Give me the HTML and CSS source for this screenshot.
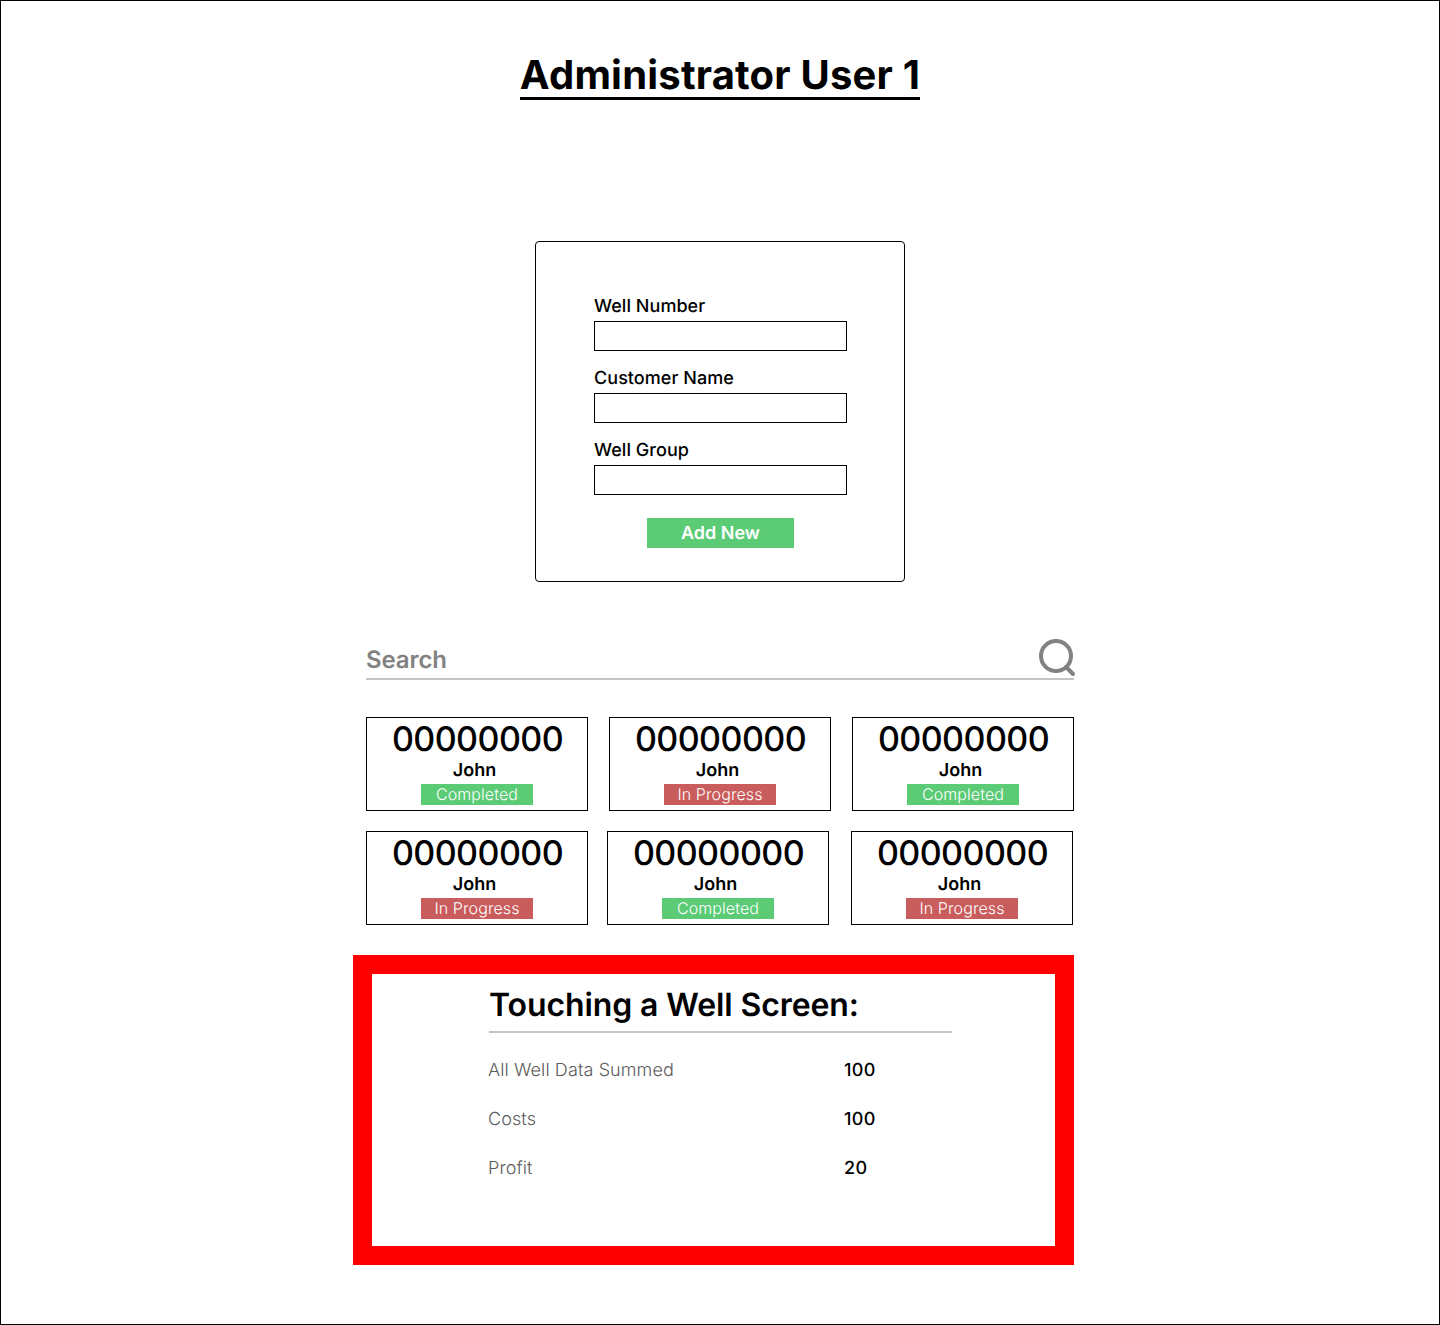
FILE: index.html
```html
<!DOCTYPE html>
<html lang="en">
<head>
<meta charset="utf-8">
<title>Administrator User 1</title>
<link rel="stylesheet" href="styles.css">
</head>
<body>
<main class="page">
  <header class="title-wrap"><h1 class="title">Administrator User 1</h1></header>

  <form class="well-form">
    <label class="field-label" for="well-number">Well Number</label>
    <input class="field-input" id="well-number" type="text">
    <label class="field-label" for="customer-name">Customer Name</label>
    <input class="field-input" id="customer-name" type="text">
    <label class="field-label" for="well-group">Well Group</label>
    <input class="field-input" id="well-group" type="text">
    <button class="add-button" type="button">Add New</button>
  </form>

  <section class="content">
    <div class="search">
      <span class="search-text">Search</span>
      <svg class="search-icon" width="38" height="38" viewBox="0 0 38 38" fill="none" aria-hidden="true">
        <circle cx="18" cy="17" r="15" stroke="#828282" stroke-width="4"/>
        <path d="M28 28 L35 35" stroke="#828282" stroke-width="4" stroke-linecap="round"/>
      </svg>
    </div>

    <div class="card-row card-row-first">
      <article class="card"><div class="card-number">00000000</div><div class="card-name">John</div><div class="card-status done">Completed</div></article>
      <article class="card"><div class="card-number">00000000</div><div class="card-name">John</div><div class="card-status progress">In Progress</div></article>
      <article class="card"><div class="card-number">00000000</div><div class="card-name">John</div><div class="card-status done">Completed</div></article>
    </div>
    <div class="card-row card-row-second">
      <article class="card"><div class="card-number">00000000</div><div class="card-name">John</div><div class="card-status progress">In Progress</div></article>
      <article class="card card-mid"><div class="card-number">00000000</div><div class="card-name">John</div><div class="card-status done">Completed</div></article>
      <article class="card card-last"><div class="card-number">00000000</div><div class="card-name">John</div><div class="card-status progress">In Progress</div></article>
    </div>

    <section class="touch-panel">
      <h2 class="touch-title">Touching a Well Screen:</h2>
      <dl class="stats">
        <dt class="stat-label">All Well Data Summed</dt><dd class="stat-value">100</dd>
        <dt class="stat-label">Costs</dt><dd class="stat-value">100</dd>
        <dt class="stat-label">Profit</dt><dd class="stat-value">20</dd>
      </dl>
    </section>
  </section>
</main>
</body>
</html>
```
FILE: styles.css
```css
* { box-sizing: border-box; }
html, body { margin: 0; padding: 0; background: #fff; }
body {
  font-family: Inter, "Liberation Sans", sans-serif;
  color: #000;
  text-rendering: geometricPrecision;
}

.page {
  width: 1440px;
  height: 1325px;
  border: 1px solid #000;
  display: flex;
  flex-direction: column;
  align-items: center;
  overflow: hidden;
}

.title-wrap { margin-top: 51px; height: 48px; }
.title {
  margin: 0;
  font-size: 40px;
  line-height: 46px;
  font-weight: 700;
  letter-spacing: 0.2px;
  border-bottom: 3px solid #000;
  height: 48px;
  white-space: nowrap;
}

.well-form {
  margin-top: 141px;
  width: 370px;
  height: 341px;
  border: 1px solid #000;
  border-radius: 4px;
  padding: 54px 57px 0 58px;
  display: flex;
  flex-direction: column;
}
.field-label {
  font-size: 18px;
  line-height: 22px;
  height: 22px;
  font-weight: 500;
  letter-spacing: 0.05px;
  margin-bottom: 3px;
}
.field-input {
  width: 253px;
  height: 30px;
  border: 1px solid #000;
  border-radius: 0;
  background: #fff;
  padding: 0;
  margin: 0 0 17px;
  display: block;
}
.add-button {
  margin: 6px 0 0 53px;
  width: 147px;
  height: 30px;
  border: 0;
  padding: 1px 0 0;
  background: #5bcb76;
  color: #fff;
  font: 600 18px/29px Inter, "Liberation Sans", sans-serif;
  text-rendering: geometricPrecision;
}

.content {
  margin-top: 54px;
  width: 708px;
  display: flex;
  flex-direction: column;
}

.search {
  height: 44px;
  border-bottom: 2px solid #c4c4c4;
  position: relative;
}
.search-text {
  display: block;
  padding-top: 9px;
  font-size: 24px;
  line-height: 29px;
  font-weight: 600;
  letter-spacing: -0.1px;
  color: #828282;
}
.search-icon { position: absolute; right: -2px; top: 3px; }

.card-row { display: flex; }
.card-row-first { margin-top: 37px; justify-content: space-between; }
.card-row-second { margin-top: 20px; }
.card-mid { margin-left: 19px; }
.card-last { margin-left: 22px; }

.card {
  width: 222px;
  height: 94px;
  border: 1px solid #000;
  display: flex;
  flex-direction: column;
  align-items: center;
}
.card-number {
  margin-top: 1px;
  padding-left: 1px;
  font-size: 34px;
  line-height: 41px;
  height: 41px;
  font-weight: 500;
  letter-spacing: -0.55px;
}
.card-name {
  padding-right: 5px;
  font-size: 18px;
  line-height: 22px;
  height: 22px;
  font-weight: 600;
}
.card-status {
  margin-top: 2px;
  width: 112px;
  height: 21px;
  color: #fff;
  font-size: 16px;
  line-height: 21px;
  font-weight: 300;
  letter-spacing: 0.1px;
  text-align: center;
}
.done { background: #5bcb76; }
.progress { background: #c95c5c; }

.touch-panel {
  margin-top: 30px;
  margin-left: -13px;
  width: 721px;
  height: 310px;
  border: 19px solid #f00;
  padding: 10px 0 0 117px;
  display: flex;
  flex-direction: column;
}
.touch-title {
  margin: 0;
  width: 463px;
  height: 49px;
  font-size: 32px;
  line-height: 42px;
  font-weight: 600;
  letter-spacing: -0.1px;
  border-bottom: 2px solid #c4c4c4;
  white-space: nowrap;
}
.stats {
  margin: 13px 0 0 -1px;
  display: grid;
  grid-template-columns: 356px 1fr;
  grid-auto-rows: 49px;
  align-items: center;
  font-size: 18px;
  line-height: 22px;
}
.stat-label { font-weight: 300; color: #5c5c5c; letter-spacing: 0.1px; }
.stat-value { margin: 0; font-weight: 500; letter-spacing: 0.3px; }
```
